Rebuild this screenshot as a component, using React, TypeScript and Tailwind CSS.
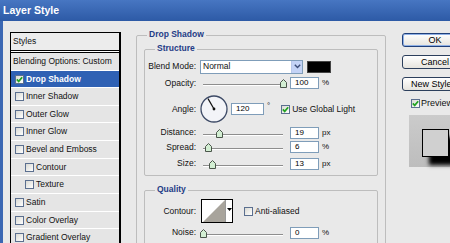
import React from 'react';

type StyleRow = { label: string; h: string; indent?: boolean; checked?: boolean; selected?: boolean; plain?: boolean };

const styleRows: StyleRow[] = [
  { label: 'Blending Options: Custom', h: 'h-[18px]', plain: true },
  { label: 'Drop Shadow', h: 'h-[17px]', checked: true, selected: true },
  { label: 'Inner Shadow', h: 'h-[18px]' },
  { label: 'Outer Glow', h: 'h-[17px]' },
  { label: 'Inner Glow', h: 'h-[18px]' },
  { label: 'Bevel and Emboss', h: 'h-[18px]' },
  { label: 'Contour', h: 'h-[17px]', indent: true },
  { label: 'Texture', h: 'h-[18px]', indent: true },
  { label: 'Satin', h: 'h-[18px]' },
  { label: 'Color Overlay', h: 'h-[17px]' },
  { label: 'Gradient Overlay', h: 'h-[18px]' },
];

function Check({ on = false }: { on?: boolean }) {
  return (
    <span className="flex h-[9px] w-[9px] shrink-0 items-center justify-center border border-[#5b6f8f] bg-gradient-to-br from-[#d9d9d3] to-white">
      {on && (
        <svg width="7" height="7" viewBox="0 0 7 7">
          <path d="M0.8 3.4 L2.7 5.4 L6.2 1.2" fill="none" stroke="#22a322" strokeWidth="1.7" />
        </svg>
      )}
    </span>
  );
}

function Slider({ pct }: { pct: number }) {
  return (
    <div className="relative ml-[7px] h-full w-[80px] shrink-0">
      <div className="absolute left-0 right-0 top-[calc(50%+1px)] h-[2px] border-t border-b border-[#8e8e8e] border-b-white" />
      <svg
        className="absolute top-[calc(50%-4px)]"
        style={{ left: pct * 0.8 - 3.5 }}
        width="7"
        height="9"
        viewBox="0 0 7 9"
      >
        <path d="M0.5 3.5 L3.5 0.5 L6.5 3.5 V8.5 H0.5 Z" fill="#d3efd3" stroke="#4b564b" />
      </svg>
    </div>
  );
}

function Field({ value, className }: { value: string; className: string }) {
  return (
    <div className={`flex items-center border border-[#7f9db9] bg-white pl-[4px] text-[8px] leading-none text-black ${className}`}>
      {value}
    </div>
  );
}

function Label({ text }: { text: string }) {
  return <span className="w-[51px] shrink-0 text-right">{text}</span>;
}

function SliderRow({ label, pct, value, unit, h }: { label: string; pct: number; value: string; unit: string; h: string }) {
  return (
    <div className={`flex items-center ${h}`}>
      <Label text={label} />
      <Slider pct={pct} />
      <Field value={value} className="ml-[7px] h-[12px] w-[29px]" />
      <span className="ml-[3px] text-[8px]">{unit}</span>
    </div>
  );
}

function Group({ title, className, children }: { title: string; className: string; children: React.ReactNode }) {
  return (
    <div className={`relative rounded-[2px] border border-[#bdbdbd] ${className}`}>
      <span className="absolute -top-[7px] left-[10px] bg-[#e9e9e9] px-[2px] text-[8.5px] font-bold leading-[11px] text-[#1f3c86]">
        {title}
      </span>
      {children}
    </div>
  );
}

function Button({ text, primary = false }: { text: string; primary?: boolean }) {
  return (
    <div
      className={`flex h-[14px] w-[66px] items-center justify-center whitespace-nowrap rounded-[3px] border bg-gradient-to-b from-white to-[#e6e4de] text-[9px] leading-none text-black ${
        primary ? 'border-[#1f3f7a] shadow-[inset_0_0_0_1px_#8fb0e6]' : 'border-[#2c3f5c]'
      }`}
    >
      {text}
    </div>
  );
}

export default function App() {
  return (
    <div className="flex h-[243px] w-[450px] flex-col overflow-hidden bg-[#e9e9e9] font-['Liberation_Sans',Arial,sans-serif] text-[#111]">
      {/* title bar */}
      <div className="flex h-[21px] shrink-0 items-center bg-gradient-to-b from-[#4776c2] to-[#2d5aa6] pl-[3px]">
        <span className="text-[10.5px] font-bold text-white">Layer Style</span>
      </div>

      <div className="flex min-h-0 flex-1">
        <div className="w-[3px] shrink-0 bg-[#3b67b3]" />

        {/* styles list */}
        <div className="ml-[7px] mt-[11px] w-[111px] shrink-0 border-l border-r-2 border-t border-black text-[8.5px]">
          <div className="flex h-[17px] items-center bg-[#ececec] pl-[2px]">Styles</div>
          <div className="h-[3px] border-y border-black bg-white" />
          {styleRows.map((r) => (
            <div
              key={r.label}
              className={`flex items-center border-b border-white ${r.h} ${
                r.selected ? 'bg-[#2f61b4] font-bold text-white' : 'bg-[#e5e5e5]'
              } ${r.plain ? 'pl-[2px]' : r.indent ? 'pl-[14px]' : 'pl-[4px]'}`}
            >
              {!r.plain && <Check on={r.checked} />}
              <span className={r.plain ? '' : 'ml-[2px]'}>{r.label}</span>
            </div>
          ))}
        </div>

        {/* main settings */}
        <div className="ml-[15px] mt-[14px] w-[250px] shrink-0">
          <Group title="Drop Shadow" className="h-[260px] px-[7px] pt-[13px]">
            <Group title="Structure" className="h-[127px] pt-[9px] text-[8.5px]">
              <div className="flex h-[15px] items-center">
                <Label text="Blend Mode:" />
                <div className="ml-[4px] flex h-[14px] w-[103px] border border-[#7f9db9] bg-white">
                  <span className="flex flex-1 items-center pl-[2px]">Normal</span>
                  <span className="flex w-[11px] items-center justify-center border-l border-[#b9c8ea] bg-[#c4d3f6]">
                    <svg width="7" height="5" viewBox="0 0 7 5">
                      <path d="M0.8 0.8 L3.5 3.6 L6.2 0.8" fill="none" stroke="#3c4d78" strokeWidth="1.4" />
                    </svg>
                  </span>
                </div>
                <div className="ml-[4px] h-[12px] w-[24px] border border-[#444] bg-black" />
              </div>

              <SliderRow label="Opacity:" pct={100} value="100" unit="%" h="h-[18px]" />

              <div className="flex h-[34px] items-center">
                <Label text="Angle:" />
                <svg className="ml-[4px] shrink-0" width="28" height="28" viewBox="0 0 28 28">
                  <circle cx="14" cy="14" r="13" fill="#f3f4f8" stroke="#3d4a66" strokeWidth="1.3" />
                  <line x1="14" y1="14" x2="8" y2="3.6" stroke="#111" strokeWidth="1.2" />
                  <circle cx="14" cy="14" r="1.4" fill="#111" />
                </svg>
                <Field value="120" className="ml-[3px] h-[12px] w-[33px]" />
                <span className="ml-[3px] -mt-[6px] text-[8px]">°</span>
                <span className="ml-[11px]">
                  <Check on />
                </span>
                <span className="ml-[2px]">Use Global Light</span>
              </div>

              <SliderRow label="Distance:" pct={20} value="19" unit="px" h="h-[13px]" />
              <SliderRow label="Spread:" pct={7} value="6" unit="%" h="h-[16px]" />
              <SliderRow label="Size:" pct={12} value="13" unit="px" h="h-[17px]" />
            </Group>

            <Group title="Quality" className="mt-[14px] h-[80px] pt-[8px] text-[8.5px]">
              <div className="flex h-[24px] items-center">
                <Label text="Contour:" />
                <div className="ml-[5px] flex h-[24px] w-[32px] shrink-0 border border-black bg-white">
                  <svg width="23" height="22" viewBox="0 0 23 22">
                    <path d="M1 22 L23 0 L23 22 Z" fill="#a8a49c" />
                  </svg>
                  <div className="flex flex-1 justify-center border-l border-[#9a9a9a] pt-[8px]">
                    <svg width="5" height="3" viewBox="0 0 5 3">
                      <path d="M0 0 H5 L2.5 3 Z" fill="#000" />
                    </svg>
                  </div>
                </div>
                <span className="ml-[11px]">
                  <Check />
                </span>
                <span className="ml-[2px]">Anti-aliased</span>
              </div>
              <div className="mt-[3px]">
                <SliderRow label="Noise:" pct={0} value="0" unit="%" h="h-[13px]" />
              </div>
            </Group>
          </Group>
        </div>

        {/* buttons and preview */}
        <div className="ml-[16px] mt-[12px] flex w-[70px] shrink-0 flex-col">
          <div className="flex flex-col gap-[8px]">
            <Button text="OK" primary />
            <Button text="Cancel" />
            <Button text="New Style..." />
          </div>
          <div className="ml-[9px] mt-[8px] flex h-[9px] items-center text-[9px]">
            <Check on />
            <span className="ml-[1px] whitespace-nowrap">Preview</span>
          </div>
          <div className="ml-[7px] mt-[7px] h-[52px] w-[60px] bg-gradient-to-b from-[#cbcbcb] to-[#bdbdbd] pl-[13px] pt-[14px]">
            <div className="h-[28px] w-[27px] border border-black bg-[#d0d0d0] shadow-[7px_8px_4px_rgba(0,0,0,1)]" />
          </div>
        </div>
      </div>
    </div>
  );
}
